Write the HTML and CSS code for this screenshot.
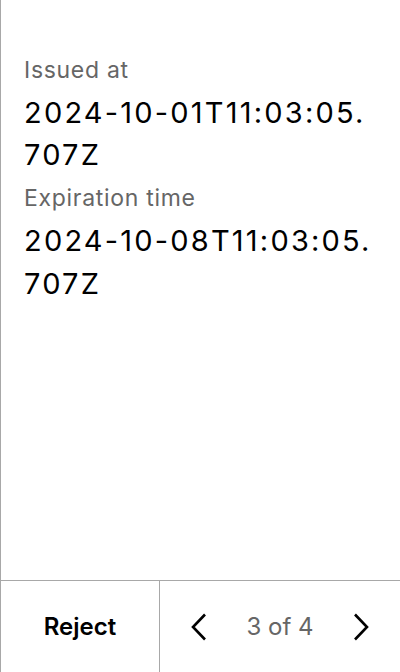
FILE: index.html
```html
<!DOCTYPE html>
<html>
<head>
<meta charset="utf-8">
<link rel="stylesheet" href="styles.css">
</head>
<body>
<div class="screen">
  <main class="content">
    <div class="field">
      <div class="label">Issued at</div>
      <div class="value">2024-10-01T11:03:05.707Z</div>
    </div>
    <div class="field">
      <div class="label">Expiration time</div>
      <div class="value">2024-10-08T11:03:05.707Z</div>
    </div>
  </main>
  <footer class="footer">
    <button class="reject">Reject</button>
    <div class="pager">
      <button class="nav" aria-label="Previous">
        <svg width="16" height="28" viewBox="0 0 16 28"><path d="M14 1.5 L2 14 L14 26.5" fill="none" stroke="#000" stroke-width="2.6" stroke-linejoin="miter"/></svg>
      </button>
      <span class="count">3 of 4</span>
      <button class="nav" aria-label="Next">
        <svg width="16" height="28" viewBox="0 0 16 28"><path d="M2 1.5 L14 14 L2 26.5" fill="none" stroke="#000" stroke-width="2.6" stroke-linejoin="miter"/></svg>
      </button>
    </div>
  </footer>
</div>
</body>
</html>
```

FILE: styles.css
```css
html, body {
  margin: 0;
  padding: 0;
  background: #fff;
}
body {
  font-family: Inter, "Noto Sans", sans-serif;
  color: #000;
}
.screen {
  height: 672px;
  display: flex;
  flex-direction: column;
  border-left: 1px solid #a8a8a8;
  box-sizing: border-box;
}
.content {
  flex: 1;
  padding: 49px 24px 0 23px;
  display: flex;
  flex-direction: column;
}
.label {
  font-size: 23px;
  line-height: 42.7px;
  letter-spacing: 0.7px;
  color: #666;
}
.value {
  font-size: 29px;
  line-height: 42.7px;
  letter-spacing: 2.2px;
  color: #000;
  word-break: break-all;
}
.footer {
  height: 92px;
  border-top: 1px solid #a8a8a8;
  display: flex;
  box-sizing: border-box;
}
button {
  font-family: inherit;
  background: none;
  border: none;
  padding: 0;
  margin: 0;
  cursor: pointer;
}
.reject {
  width: 159px;
  border-right: 1px solid #a8a8a8;
  font-size: 24px;
  font-weight: 600;
  color: #000;
}
.pager {
  flex: 1;
  display: flex;
  align-items: center;
  justify-content: space-between;
  padding: 0 31px 0 31px;
}
.nav {
  display: flex;
  align-items: center;
}
.count {
  font-size: 24px;
  color: #666;
}
```
